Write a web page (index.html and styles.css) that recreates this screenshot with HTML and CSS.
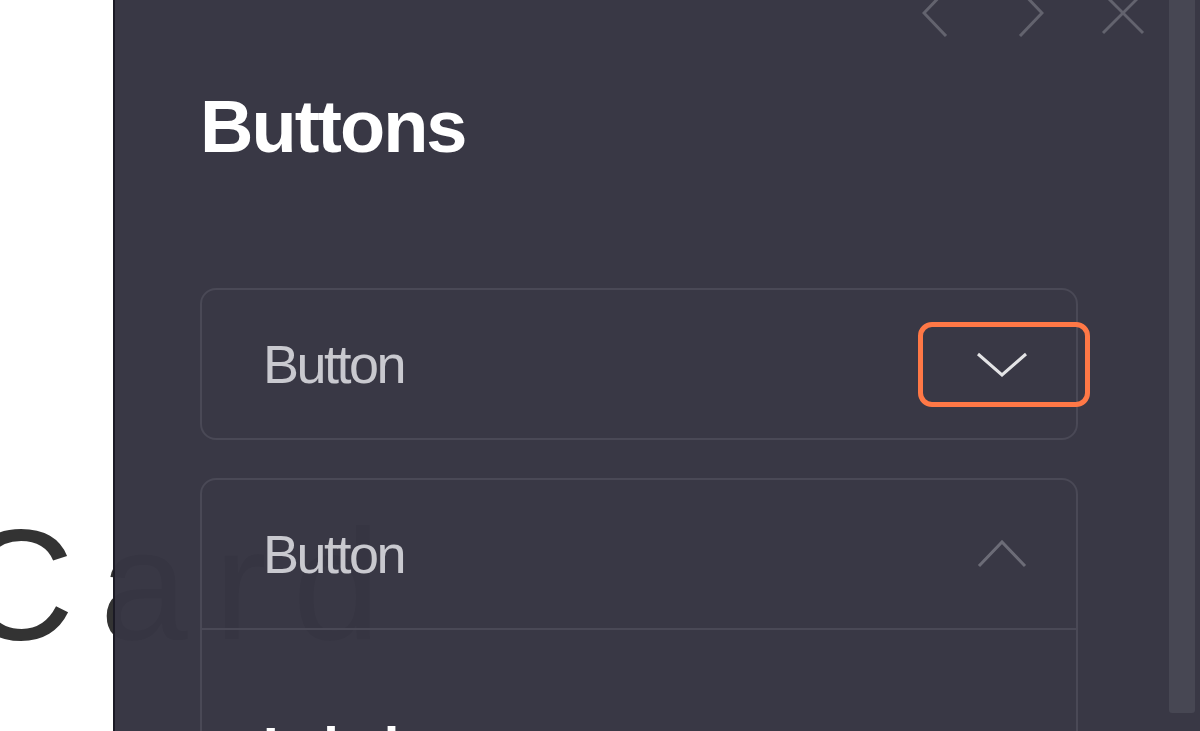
FILE: index.html
```html
<!DOCTYPE html>
<html lang="en">
<head>
    <meta charset="UTF-8">
    <meta name="viewport" content="width=device-width, initial-scale=1.0">
    <title>Card - Buttons</title>
    <link rel="stylesheet" href="styles.css">
</head>
<body>
    <main class="page">
        <h1 class="page-title">Card</h1>
    </main>

    <aside class="drawer">
        <div class="drawer-body">
            <nav class="drawer-nav">
                <button class="nav-btn nav-prev" type="button" aria-label="Previous">
                    <svg width="26" height="48" viewBox="0 0 26 48"><polyline points="24,1 2,24 24,47"/></svg>
                </button>
                <button class="nav-btn nav-next" type="button" aria-label="Next">
                    <svg width="26" height="48" viewBox="0 0 26 48"><polyline points="2,1 24,24 2,47"/></svg>
                </button>
                <button class="nav-btn nav-close" type="button" aria-label="Close">
                    <svg width="44" height="44" viewBox="0 0 44 44"><line x1="2" y1="2" x2="42" y2="42"/><line x1="42" y1="2" x2="2" y2="42"/></svg>
                </button>
            </nav>

            <h2 class="drawer-title">Buttons</h2>

            <div class="accordion">
                <section class="acc-item">
                    <div class="acc-head">
                        <span class="acc-label">Button</span>
                        <button class="acc-toggle is-focused" type="button" aria-expanded="false">
                            <svg class="chev chev-down" width="52" height="26" viewBox="0 0 52 26"><polyline points="2,3 26,24 50,3"/></svg>
                        </button>
                    </div>
                </section>

                <section class="acc-item">
                    <div class="acc-head">
                        <span class="acc-label">Button</span>
                        <button class="acc-toggle" type="button" aria-expanded="true">
                            <svg class="chev chev-up" width="52" height="28" viewBox="0 0 52 28"><polyline points="3,26 26,2 49,26"/></svg>
                        </button>
                    </div>
                    <div class="acc-content">
                        <p class="acc-text">Label</p>
                    </div>
                </section>
            </div>
        </div>
        <div class="scroll-track">
            <div class="scroll-thumb"></div>
        </div>
    </aside>
</body>
</html>
```

FILE: styles.css
```css
body {
    margin: 0;
    background-color: #ffffff;
    font-family: "Liberation Sans", Arial, sans-serif;
    overflow: hidden;
}

.page {
    padding-top: 505px;
}

.page-title {
    margin: 0 0 0 -40px;
    font-size: 158px;
    font-weight: 400;
    line-height: 1;
    color: #333333;
    letter-spacing: 26px;
}

/* drawer overlay */
.drawer {
    position: fixed;
    top: 0;
    left: 113px;
    right: 0;
    bottom: 0;
    display: flex;
    background-color: rgba(55, 54, 67, 0.99);
    border-left: 2px solid #1b1a25;
}

.drawer-body {
    flex: 1;
    padding-left: 85px;
}

.drawer-nav {
    display: flex;
    justify-content: flex-end;
    align-items: center;
    height: 48px;
    margin-top: -11px;
    padding-right: 24px;
}

.nav-btn {
    padding: 0;
    border: none;
    background: none;
    display: flex;
}

.nav-btn svg {
    fill: none;
    stroke: #63636e;
    stroke-width: 3;
}

.nav-prev {
    margin-right: 70px;
}

.nav-next {
    margin-right: 57px;
}

.drawer-title {
    margin: 53px 0 0 0;
    font-size: 74px;
    font-weight: 700;
    line-height: 1;
    letter-spacing: -2px;
    color: #ffffff;
}

.accordion {
    display: flex;
    flex-direction: column;
    gap: 38px;
    width: 878px;
    margin-top: 124px;
}

.acc-item {
    border: 2px solid #4a4956;
    border-radius: 16px;
}

.acc-head {
    display: flex;
    align-items: center;
    justify-content: space-between;
    height: 148px;
    padding-left: 61px;
}

.acc-label {
    font-size: 54px;
    letter-spacing: -2.5px;
    color: #c9c9cf;
}

.acc-toggle {
    display: flex;
    align-items: center;
    justify-content: center;
    width: 162px;
    height: 75px;
    margin-right: -9px;
    padding: 0;
    border: none;
    border-radius: 9px;
    background: none;
}

.acc-toggle.is-focused {
    outline: 5px solid #ff7846;
}

.chev {
    fill: none;
    stroke-width: 3;
}

.chev-down {
    stroke: #e4e4e6;
    margin-right: 4px;
}

.chev-up {
    stroke: #6c6c77;
    margin-right: 4px;
}

.acc-content {
    border-top: 2px solid #4a4956;
    padding: 89px 0 40px 61px;
}

.acc-text {
    margin: 0;
    font-size: 56px;
    font-weight: 700;
    line-height: 1;
    letter-spacing: -2.5px;
    color: #ffffff;
}

.scroll-track {
    width: 31px;
    flex-shrink: 0;
}

.scroll-thumb {
    width: 26px;
    height: 713px;
    background-color: #474753;
    border-radius: 0 0 3px 3px;
}
```
